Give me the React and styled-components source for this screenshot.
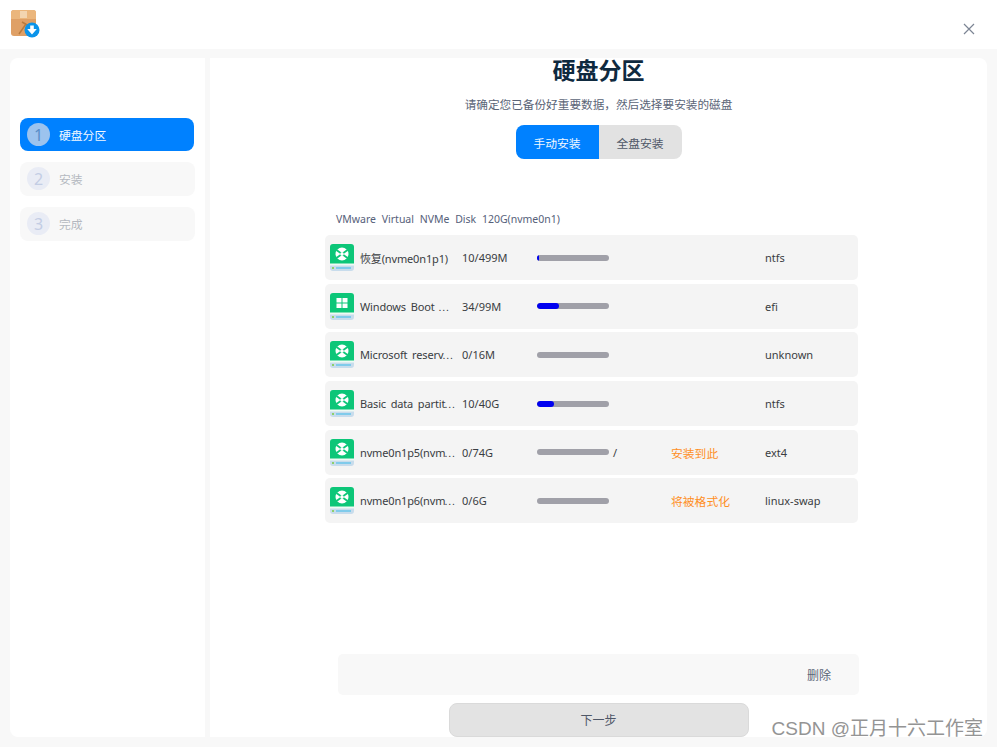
import React from 'react';
import styled, { createGlobalStyle } from 'styled-components';

const GlobalStyle = createGlobalStyle`
  html, body {
    margin: 0;
    padding: 0;
    height: 100%;
    overflow: hidden;
    background: #f8f8f8;
  }
  body {
    font-family: "Noto Sans", "Noto Sans CJK SC", sans-serif;
  }
`;

const Window = styled.div`
  position: relative;
  width: 997px;
  height: 747px;
  display: flex;
  flex-direction: column;
  background: #f8f8f8;
`;

const TitleBar = styled.div`
  height: 49px;
  padding: 0 22px 0 10px;
  display: flex;
  align-items: center;
  justify-content: space-between;
  background: #fff;
`;

const Logo = styled.svg`
  display: block;
  margin-top: -1px;
`;

const CloseButton = styled.div`
  display: flex;
  color: #7c8594;
  margin-top: 8px;
`;

const Body = styled.div`
  display: flex;
  gap: 5px;
  height: 679px;
  margin-top: 9px;
  padding: 0 10px;
`;

const Sidebar = styled.div`
  width: 195px;
  padding: 60px 10px 0;
  box-sizing: border-box;
  display: flex;
  flex-direction: column;
  gap: 10.5px;
  background: #fff;
  border-radius: 8px 0 0 8px;
`;

const Step = styled.div`
  width: ${(p) => (p.$active ? '174px' : '175px')};
  height: ${(p) => (p.$active ? '33px' : '34.5px')};
  padding-left: 7px;
  box-sizing: border-box;
  display: flex;
  align-items: center;
  gap: 9px;
  border-radius: 8px;
  font-size: 11.8px;
  background: ${(p) => (p.$active ? '#0081ff' : '#f8f8f8')};
  color: ${(p) => (p.$active ? '#f2f8ff' : '#b4b8c0')};
`;

const StepNumber = styled.span`
  width: 23px;
  height: 23px;
  border-radius: 50%;
  display: flex;
  align-items: center;
  justify-content: center;
  font-size: 16px;
  background: ${(p) => (p.$active ? '#9cc3ee' : '#e9ecf5')};
  color: ${(p) => (p.$active ? '#5a8ec8' : '#c3cde4')};
`;

const Main = styled.div`
  flex: 1;
  display: flex;
  flex-direction: column;
  align-items: center;
  background: #fff;
  border-radius: 0 8px 8px 0;
`;

const Heading = styled.h1`
  margin: -1px 0 0;
  font-size: 23px;
  line-height: 27px;
  font-weight: 700;
  color: #0f2a3f;
`;

const Subtitle = styled.p`
  margin: 12px 0 0;
  font-size: 11.65px;
  line-height: 17px;
  color: #5b6577;
`;

const Toggle = styled.div`
  display: flex;
  margin-top: 12px;
  width: 166px;
  height: 34px;
  border-radius: 8px;
  overflow: hidden;
`;

const ToggleItem = styled.div`
  flex: ${(p) => (p.$on ? '0 0 83px' : '1')};
  display: flex;
  align-items: center;
  justify-content: center;
  font-size: 11.8px;
  background: ${(p) => (p.$on ? '#0081ff' : '#e2e2e2')};
  color: ${(p) => (p.$on ? '#f2f8ff' : '#4f5767')};
`;

const DiskName = styled.div`
  align-self: flex-start;
  margin: 52px 0 0 126px;
  font-size: 10.5px;
  line-height: 17px;
  word-spacing: 3px;
  color: #56617a;
`;

const DiskList = styled.div`
  align-self: flex-start;
  margin: 7px 0 0 115px;
  width: 533px;
  display: flex;
  flex-direction: column;
  gap: 3.7px;
`;

const Row = styled.div`
  height: 45px;
  padding-left: 5px;
  box-sizing: border-box;
  display: grid;
  grid-template-columns: 30px 102px 75px 76px 58px 94px 1fr;
  align-items: center;
  border-radius: 5px;
  background: #f4f4f4;
  font-size: 11px;
  color: #3a3d42;
`;

const Name = styled.span`
  white-space: nowrap;
  word-spacing: 2px;
  letter-spacing: -0.15px;
`;

const Dots = styled.span`
  margin-left: -1px;
  font-family: "Noto Sans CJK SC", sans-serif;
  font-size: 10px;
`;

const Bar = styled.div`
  width: 72px;
  height: 6px;
  border-radius: 3px;
  overflow: hidden;
  background: #a0a0a8;
`;

const BarFill = styled.div`
  height: 100%;
  border-radius: 3px;
  background: #0000f0;
`;

const Status = styled.span`
  font-size: 11.8px;
  color: #ff8f24;
`;

const DeleteBar = styled.div`
  align-self: flex-start;
  margin: auto 0 0 128px;
  width: 521px;
  height: 41px;
  padding-right: 28px;
  box-sizing: border-box;
  display: flex;
  align-items: center;
  justify-content: flex-end;
  border-radius: 5px;
  background: #f8f8f8;
  font-size: 12px;
  color: #5b6577;
`;

const NextButton = styled.div`
  width: 300px;
  height: 34px;
  margin-top: 8px;
  box-sizing: border-box;
  display: flex;
  align-items: center;
  justify-content: center;
  border: 1px solid #dadada;
  border-radius: 8px;
  background: #e3e3e3;
  font-size: 12px;
  color: #4f5767;
`;

const Watermark = styled.div`
  position: absolute;
  right: 14px;
  bottom: 6px;
  font-family: "Liberation Sans", "Noto Sans CJK SC", sans-serif;
  font-size: 19px;
  line-height: 24px;
  color: #949494;
`;

const AppLogo = () => (
  <Logo width="30" height="28" viewBox="0 0 30 28">
    <rect x="1" y="0" width="25" height="26" rx="3" fill="#dfa066" />
    <path d="M4 0 h19 a3 3 0 0 1 3 3 v6 h-25 v-6 a3 3 0 0 1 3 -3 z" fill="#ebb67c" />
    <rect x="10" y="1" width="7" height="7" fill="#f3d5b0" />
    <path d="M9 24 L16 14 M12 12 L19 16" stroke="#b87a3e" strokeWidth="1.5" fill="none" />
    <circle cx="22" cy="20" r="7.5" fill="#0b94ea" />
    <path d="M20.2 15.5 h3.6 v3.5 h3 l-4.8 5.5 l-4.8 -5.5 h3 z" fill="#fff" />
  </Logo>
);

const PartitionIcon = ({ windows }) => (
  <svg width="24" height="27" viewBox="0 0 24 27" style={{ display: 'block' }}>
    <path d="M3 0 h18 a3 3 0 0 1 3 3 v17 h-24 v-17 a3 3 0 0 1 3 -3 z" fill="#0cc678" />
    <path d="M0 20 h24 v4 a3 3 0 0 1 -3 3 h-18 a3 3 0 0 1 -3 -3 z" fill="#c8dcec" />
    <rect x="0" y="19.5" width="24" height="2" fill="#eefaf4" />
    <rect x="2" y="23" width="2" height="2" fill="#8ed06a" />
    <rect x="6" y="23.2" width="15" height="1.6" fill="#6fc8ea" />
    {windows ? (
      <g fill="#fff">
        <rect x="6.5" y="5" width="5" height="4.5" />
        <rect x="12.5" y="5" width="5" height="4.5" />
        <rect x="6.5" y="10.5" width="5" height="4.5" />
        <rect x="12.5" y="10.5" width="5" height="4.5" />
      </g>
    ) : (
      <g>
        <circle cx="12" cy="10" r="6.5" fill="#fff" />
        <path d="M6.5 6 L17.5 14 M17.5 6 L6.5 14" stroke="#0cc678" strokeWidth="1.8" fill="none" />
        <circle cx="12" cy="10" r="1.8" fill="#fff" />
      </g>
    )}
  </svg>
);

const steps = [
  { n: 1, label: '硬盘分区', active: true },
  { n: 2, label: '安装' },
  { n: 3, label: '完成' },
];

const partitions = [
  { name: 'partition-1', label: '恢复(nvme0n1p1)', usage: '10/499M', pct: 3, fs: 'ntfs' },
  { name: 'partition-2', label: 'Windows Boot ', cut: true, usage: '34/99M', pct: 30, fs: 'efi', windows: true },
  { name: 'partition-3', label: 'Microsoft reserv', cut: true, usage: '0/16M', pct: 0, fs: 'unknown' },
  { name: 'partition-4', label: 'Basic data partit', cut: true, usage: '10/40G', pct: 24, fs: 'ntfs' },
  { name: 'partition-5', label: 'nvme0n1p5(nvm', cut: true, usage: '0/74G', pct: 0, mount: '/', status: '安装到此', fs: 'ext4' },
  { name: 'partition-6', label: 'nvme0n1p6(nvm', cut: true, usage: '0/6G', pct: 0, status: '将被格式化', fs: 'linux-swap' },
];

export default function App() {
  return (
    <Window>
      <GlobalStyle />
      <TitleBar>
        <AppLogo />
        <CloseButton>
          <svg width="12" height="12" viewBox="0 0 12 12">
            <path d="M1 1 L11 11 M11 1 L1 11" stroke="currentColor" strokeWidth="1.2" />
          </svg>
        </CloseButton>
      </TitleBar>
      <Body>
        <Sidebar>
          {steps.map((s) => (
            <Step key={s.n} $active={s.active}>
              <StepNumber $active={s.active}>{s.n}</StepNumber>
              {s.label}
            </Step>
          ))}
        </Sidebar>
        <Main>
          <Heading>硬盘分区</Heading>
          <Subtitle>请确定您已备份好重要数据，然后选择要安装的磁盘</Subtitle>
          <Toggle>
            <ToggleItem $on>手动安装</ToggleItem>
            <ToggleItem>全盘安装</ToggleItem>
          </Toggle>
          <DiskName>VMware Virtual NVMe Disk 120G(nvme0n1)</DiskName>
          <DiskList>
            {partitions.map((p) => (
              <Row key={p.name}>
                <PartitionIcon windows={p.windows} />
                <Name>
                  {p.label}
                  {p.cut && <Dots>⋯</Dots>}
                </Name>
                <span>{p.usage}</span>
                <Bar>
                  {p.pct > 0 && <BarFill style={{ width: `${p.pct}%` }} />}
                </Bar>
                <span>{p.mount}</span>
                <Status>{p.status}</Status>
                <span>{p.fs}</span>
              </Row>
            ))}
          </DiskList>
          <DeleteBar>删除</DeleteBar>
          <NextButton>下一步</NextButton>
        </Main>
      </Body>
      <Watermark>CSDN @正月十六工作室</Watermark>
    </Window>
  );
}
